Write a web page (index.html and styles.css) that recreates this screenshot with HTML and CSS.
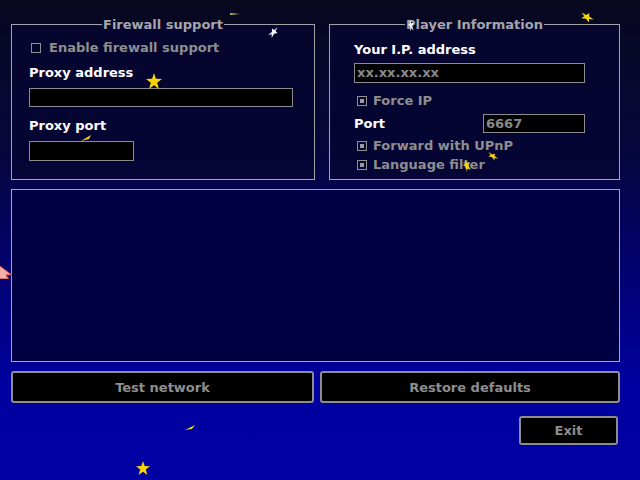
FILE: index.html
```html
<!DOCTYPE html>
<html lang="en">
<head>
    <meta charset="UTF-8">
    <title>Network Settings</title>
    <link rel="stylesheet" href="styles.css">
</head>
<body>
    <div class="screen">
        <div class="top">
            <fieldset class="panel firewall">
                <legend>Firewall support</legend>
                <div class="check first-check"><span class="box"></span>Enable firewall support</div>
                <div class="label proxy-label">Proxy address</div>
                <div class="field proxy-address"></div>
                <div class="label port-label">Proxy port</div>
                <div class="field proxy-port"></div>
            </fieldset>
            <fieldset class="panel player">
                <legend>Player Information</legend>
                <div class="label ip-label">Your I.P. address</div>
                <div class="field ip-field">xx.xx.xx.xx</div>
                <div class="check on force-ip"><span class="box"></span>Force IP</div>
                <div class="port-row">
                    <span class="label">Port</span>
                    <div class="field port-field">6667</div>
                </div>
                <div class="check on upnp"><span class="box"></span>Forward with UPnP</div>
                <div class="check on lang"><span class="box"></span>Language filter</div>
            </fieldset>
        </div>

        <div class="log"></div>

        <div class="actions">
            <button class="btn">Test network</button>
            <button class="btn">Restore defaults</button>
        </div>
        <div class="exit-row">
            <button class="btn exit">Exit</button>
        </div>
    </div>

    <!-- falling stars -->
    <svg class="star" style="left:146px;top:73px" width="16" height="16" viewBox="0 0 10 10"><polygon points="5,0 6.2,3.6 10,3.8 7,6.1 8.1,10 5,7.7 1.9,10 3,6.1 0,3.8 3.8,3.6" fill="#f6d40a"/></svg>
    <svg class="star" style="left:136px;top:461px" width="14" height="14" viewBox="0 0 10 10"><polygon points="5,0 6.2,3.6 10,3.8 7,6.1 8.1,10 5,7.7 1.9,10 3,6.1 0,3.8 3.8,3.6" fill="#f6d40a"/></svg>
    <svg class="star" style="left:580px;top:10px" width="14" height="14" viewBox="0 0 10 10"><polygon points="5,0 6.2,3.6 10,3.8 7,6.1 8.1,10 5,7.7 1.9,10 3,6.1 0,3.8 3.8,3.6" fill="#f6d40a" transform="rotate(30 5 5) scale(1 .6) translate(0 3)"/></svg>
    <svg class="star" style="left:486px;top:150px" width="14" height="12" viewBox="0 0 10 10"><polygon points="5,0 6.2,3.6 10,3.8 7,6.1 8.1,10 5,7.7 1.9,10 3,6.1 0,3.8 3.8,3.6" fill="#f6d40a" transform="rotate(35 5 5) scale(1 .5) translate(0 5)"/></svg>
    <svg class="star" style="left:461px;top:158px" width="12" height="14" viewBox="0 0 10 10"><polygon points="5,0 6.2,3.6 10,3.8 7,6.1 8.1,10 5,7.7 1.9,10 3,6.1 0,3.8 3.8,3.6" fill="#f6d40a" transform="rotate(-20 5 5) scale(.6 1) translate(3 0)"/></svg>
    <svg class="star" style="left:268px;top:26px" width="12" height="12" viewBox="0 0 10 10"><polygon points="5,0 6.2,3.6 10,3.8 7,6.1 8.1,10 5,7.7 1.9,10 3,6.1 0,3.8 3.8,3.6" fill="#f4f4f4" transform="rotate(40 5 5) scale(.6 1) translate(3 0)"/></svg>
    <svg class="star" style="left:405px;top:18px" width="12" height="14" viewBox="0 0 10 10"><polygon points="5,0 6.2,3.6 10,3.8 7,6.1 8.1,10 5,7.7 1.9,10 3,6.1 0,3.8 3.8,3.6" fill="#f4f4f4" transform="rotate(-10 5 5) scale(.45 1) translate(6 0)"/></svg>
    <svg class="star" style="left:80px;top:134px" width="12" height="8" viewBox="0 0 12 8"><path d="M1 7 L11 1 L9 5 Z" fill="#f6d40a"/></svg>
    <svg class="star" style="left:184px;top:424px" width="12" height="7" viewBox="0 0 12 7"><path d="M1 6 L11 1 L8 5 Z" fill="#f6d40a"/></svg>
    <svg class="star" style="left:230px;top:12px" width="10" height="4" viewBox="0 0 10 4"><path d="M0 1 L10 2 L0 3 Z" fill="#b8c040"/></svg>

    <!-- mouse pointer at the screen edge -->
    <svg class="pointer" width="14" height="16" viewBox="0 0 14 16"><path d="M-4 0 L12 12 L6 12 L9 16 L-4 16 Z" fill="#f7b0a8" stroke="#c83838" stroke-width="1"/></svg>
</body>
</html>
```

FILE: styles.css
```css
body {
    margin: 0;
    width: 640px;
    height: 480px;
    overflow: hidden;
    position: relative;
    font-family: "DejaVu Sans", Verdana, sans-serif;
    font-weight: bold;
    font-size: 13px;
    line-height: 16px;
    color: #8e8e8e;
    background: linear-gradient(to bottom, #08081f 0%, #06063a 30%, #02026e 55%, #0000a0 80%, #0000a4 100%);
}
.screen {
    padding: 16px 20px 0 11px;
}
.top {
    display: grid;
    grid-template-columns: 304px 291px;
    column-gap: 14px;
    height: 164px;
}
.panel {
    margin: 0;
    padding: 0 17px;
    border: 1px solid #a4a4a8;
    background: rgba(6, 6, 50, 0.75);
    min-width: 0;
}
.panel legend {
    margin: 0 auto;
    padding: 2px 1px 0;
    color: #a6a6aa;
    line-height: 14px;
}
.player {
    padding: 0 24px;
}
.label {
    color: #ffffff;
}
.field {
    box-sizing: border-box;
    background: #000;
    border: 1px solid #8c8c90;
    color: #8a8a8a;
    padding-left: 2px;
    line-height: 17px;
}
.check {
    display: flex;
    align-items: center;
}
.check .box {
    box-sizing: border-box;
    width: 10px;
    height: 10px;
    border: 1px solid #909090;
    margin: 0 8px 0 2px;
    position: relative;
}
.check.on .box {
    margin: 0 6px 0 3px;
}
.check.on .box::after {
    content: "";
    position: absolute;
    left: 2px;
    top: 2px;
    width: 4px;
    height: 4px;
    background: #9a9a9a;
}

/* firewall panel */
.first-check { margin-top: 8px; }
.proxy-label { margin-top: 9px; }
.proxy-address { margin-top: 7px; height: 19px; width: 264px; }
.port-label { margin-top: 11px; }
.proxy-port { margin-top: 7px; height: 20px; width: 105px; }

/* player panel */
.ip-label { margin-top: 10px; }
.ip-field { margin-top: 5px; height: 20px; width: 231px; }
.force-ip { margin-top: 10px; }
.port-row {
    margin-top: 5px;
    display: flex;
    align-items: center;
    height: 19px;
}
.port-row .label {
    width: 129px;
}
.port-field {
    width: 102px;
    height: 19px;
}
.upnp { margin-top: 5px; }
.lang { margin-top: 3px; }

.log {
    margin-top: 9px;
    height: 171px;
    border: 1px solid #a8a8ac;
    background: #000042;
}
.actions {
    margin-top: 9px;
    display: grid;
    grid-template-columns: 303px 300px;
    column-gap: 6px;
}
.btn {
    box-sizing: border-box;
    height: 32px;
    background: #000;
    border: 2px solid #8e8e92;
    border-radius: 3px;
    color: #8e8e8e;
    font-family: "DejaVu Sans", Verdana, sans-serif;
    font-weight: bold;
    font-size: 13px;
    padding: 0;
}
.exit-row {
    margin-top: 13px;
    display: flex;
    justify-content: flex-end;
    padding-right: 2px;
}
.exit {
    width: 99px;
    height: 29px;
}
.star {
    position: absolute;
}
.pointer {
    position: absolute;
    left: 0;
    top: 263px;
}
```
